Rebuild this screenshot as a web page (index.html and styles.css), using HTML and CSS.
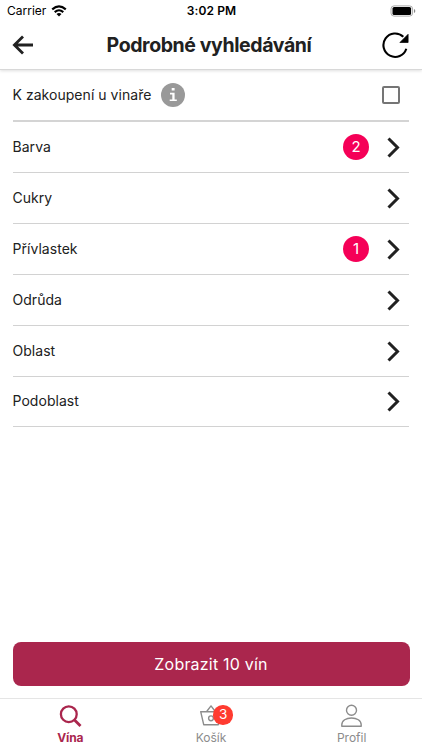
FILE: index.html
```html
<!DOCTYPE html>
<html lang="cs">
<head>
<meta charset="utf-8">
<title>Podrobné vyhledávání</title>
<link rel="stylesheet" href="styles.css">
</head>
<body>
<div class="app">
  <header class="top">
    <div class="status">
      <div class="carrier"><span>Carrier</span>
        <svg width="16" height="12" viewBox="0 0 16 12" fill="none" stroke="#000" stroke-width="2.1"><path d="M1.2 4.4Q8-1.6 14.8 4.4M3.7 7.1Q8 3.4 12.3 7.1"/><path d="M5.500 8.900Q8 7 10.500 8.900L8 11.400Z" fill="#000" stroke="none"/></svg>
      </div>
      <time class="clock">3:02 PM</time>
      <svg class="battery" width="26" height="12" viewBox="0 0 26 12"><rect x="1" y=".9" width="21.600" height="10.200" rx="3" fill="#fff" stroke="#aaa"/><rect x="2.500" y="2" width="18.600" height="8" rx="1.600"/><path d="M24 4v4q1.300-.6 1.300-2t-1.300-2" fill="#888"/></svg>
    </div>
    <div class="bar">
      <svg width="22" height="20" viewBox="0 0 22 20" fill="none" stroke="#212121" stroke-width="2.800"><path d="M21 10H2.500M11 1.400L2.400 10l8.600 8.600"/></svg>
      <h1>Podrobné vyhledávání</h1>
      <svg width="28" height="28" viewBox="0 0 28 28"><path d="M25.300 17.700A11.700 11.700 0 1 1 22.300 5.800" fill="none" stroke="#000" stroke-width="2.100"/><path d="M27.100 3.300v8.200h-8.200z" stroke="#000" stroke-width=".7" stroke-linejoin="round"/></svg>
    </div>
  </header>
  <main>
    <div class="row purchase">
      <span class="label">K zakoupení u vinaře</span>
      <svg class="info" width="24" height="24" viewBox="0 0 24 24"><circle cx="12" cy="12" r="12" fill="#999"/><path d="M10.700 5h2.900v2.600h-2.900zM9 9.800h4.600v6.600h2.200v1.700H8.700v-1.700h2.600v-4.900H9z" fill="#fff"/></svg>
      <span class="check"></span>
    </div>
    <div class="row"><span class="label">Barva</span><span class="count">2</span><svg class="chev" width="13" height="21" viewBox="0 0 13 21"><path d="M1.500 1.500l9 9-9 9"/></svg></div>
    <div class="row"><span class="label">Cukry</span><svg class="chev" width="13" height="21" viewBox="0 0 13 21"><path d="M1.500 1.500l9 9-9 9"/></svg></div>
    <div class="row"><span class="label">Přívlastek</span><span class="count">1</span><svg class="chev" width="13" height="21" viewBox="0 0 13 21"><path d="M1.500 1.500l9 9-9 9"/></svg></div>
    <div class="row"><span class="label">Odrůda</span><svg class="chev" width="13" height="21" viewBox="0 0 13 21"><path d="M1.500 1.500l9 9-9 9"/></svg></div>
    <div class="row"><span class="label">Oblast</span><svg class="chev" width="13" height="21" viewBox="0 0 13 21"><path d="M1.500 1.500l9 9-9 9"/></svg></div>
    <div class="row last"><span class="label">Podoblast</span><svg class="chev" width="13" height="21" viewBox="0 0 13 21"><path d="M1.500 1.500l9 9-9 9"/></svg></div>
  </main>
  <button class="show">Zobrazit 10 vín</button>
  <nav>
    <div class="tab active">
      <svg width="24" height="24" viewBox="0 0 24 24" fill="none" stroke="#aa264d" stroke-width="2.300"><circle cx="10.800" cy="10.200" r="7.900"/><path d="M16.500 16l6 5.900" stroke-width="2.800"/></svg>
      <span>Vína</span>
    </div>
    <div class="tab">
      <div class="basket">
        <svg width="24" height="24" viewBox="0 0 24 24" fill="none" stroke="#8c8c8c" stroke-width="1.400" stroke-linejoin="round"><path d="M1.700 7.700h20.600l-3 13H4.700zM7.700 7.500L12 1.900l4.300 5.600"/><circle cx="12" cy="14.300" r="2.400"/></svg>
        <span class="badge">3</span>
      </div>
      <span>Košík</span>
    </div>
    <div class="tab">
      <svg width="24" height="24" viewBox="0 0 24 24" fill="none" stroke="#8c8c8c" stroke-width="1.400" stroke-linejoin="round"><circle cx="11.500" cy="6.300" r="5"/><path d="M1.800 22.300v-1.600c0-4.200 4.400-6.700 9.700-6.700s9.700 2.500 9.700 6.700v1.600z"/></svg>
      <span>Profil</span>
    </div>
  </nav>
</div>
</body>
</html>
```
FILE: styles.css
```css
* { box-sizing: border-box; }
body { margin: 0; background: #fff; color: #212121; font-family: Inter, "Liberation Sans", sans-serif; }
svg { display: block; flex: none; }
.app { width: 422px; height: 750px; display: flex; flex-direction: column; overflow: hidden; }
.top { height: 70px; flex: none; border-bottom: 1px solid #d8d8d8; box-shadow: 0 1px 3px rgba(0,0,0,.13); }
.status { height: 21px; padding: 0 6px 0 7px; display: grid; grid-template-columns: 1fr auto 1fr; align-items: center; color: #000; font-size: 12px; }
.carrier { display: flex; align-items: center; gap: 5px; }
.clock { font-weight: 600; letter-spacing: .1px; }
.battery { justify-self: end; }
.bar { height: 48px; padding: 0 13px 0 12px; display: flex; align-items: center; justify-content: space-between; }
h1 { margin: 0 0 0 3px; font-size: 19.500px; font-weight: 700; letter-spacing: -.4px; white-space: nowrap; }
main { padding: 0 13px 0 12.500px; flex: 1; }
.row { height: 51px; display: flex; align-items: center; border-bottom: 1px solid #d2d2d2; padding-right: 9px; }
.row.purchase { height: 52px; border-bottom: 2px solid #d4d4d4; }
.row.last { height: 50px; }
.label { margin-bottom: 2px; font-size: 14px; letter-spacing: .04px; white-space: nowrap; }
.info { margin-left: 9.500px; }
.check { width: 18px; height: 18px; margin-left: auto; border: 2px solid #757575; border-radius: 2px; }
.count { width: 26px; height: 26px; margin-left: auto; margin-right: 18px; border-radius: 50%; background: #f50057; color: #fff; font-size: 15px; line-height: 26px; text-align: center; }
.chev { fill: none; stroke: #212121; stroke-width: 3; }
.label + .chev { margin-left: auto; }
.show { flex: none; height: 44px; margin: 0 12.500px 12px; padding: 0; border: 0; border-radius: 8px; background: #aa264d; color: #fff; font: 400 16px Inter, sans-serif; letter-spacing: .2px; }
nav { height: 51.600px; flex: none; border-top: 1px solid #e5e5e5; display: grid; grid-template-columns: repeat(3, 1fr); }
.tab { display: flex; flex-direction: column; align-items: center; padding-top: 5px; color: #8c8c8c; font-size: 12px; line-height: 15px; }
.tab > span { margin-top: 2px; }
.active { color: #aa264d; font-weight: 700; }
.active > span { letter-spacing: -.1px; }
.basket { position: relative; }
.badge { position: absolute; left: 14.500px; top: 1px; width: 19.500px; height: 19.500px; border-radius: 50%; background: #ff3b30; color: #fff; font-size: 13.500px; line-height: 19.500px; text-align: center; }
```
